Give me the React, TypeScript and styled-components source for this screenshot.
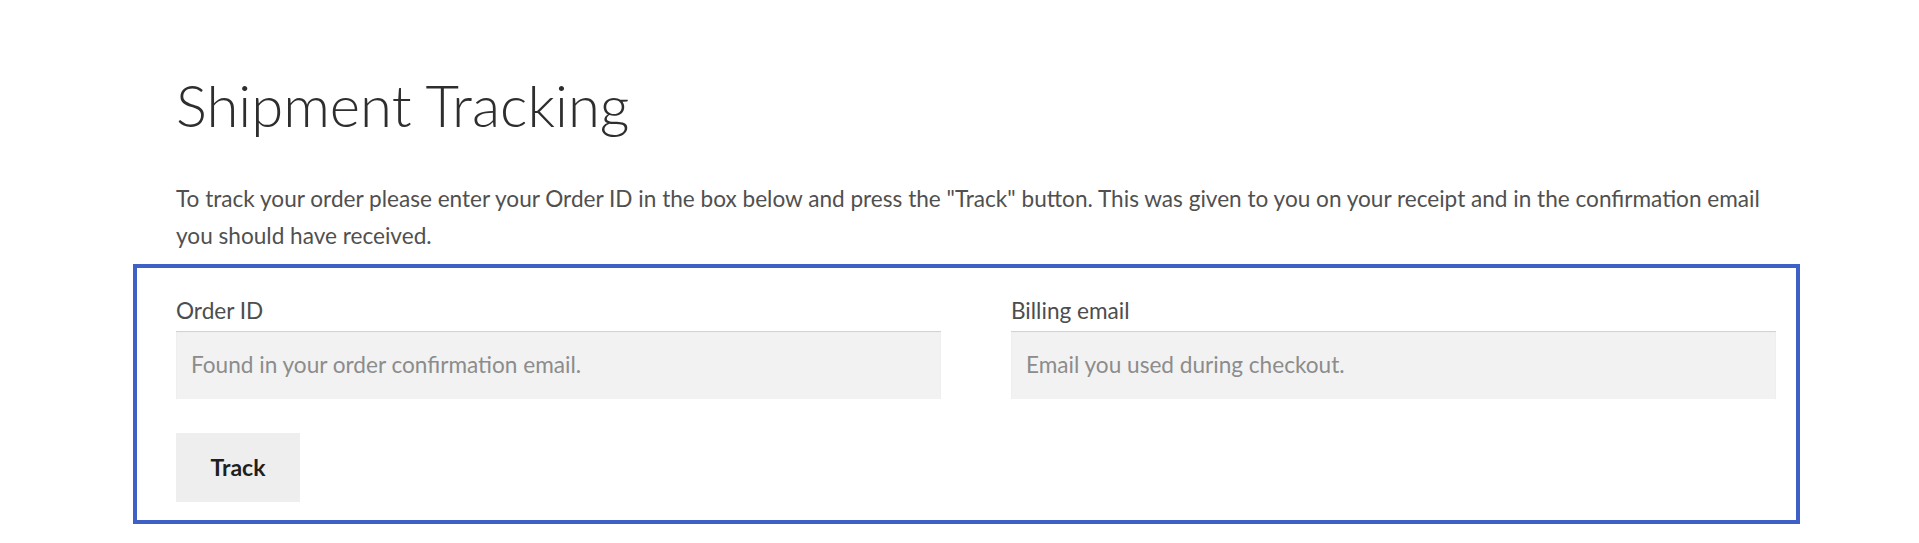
import React from "react";
import styled, { createGlobalStyle } from "styled-components";

const GlobalStyle = createGlobalStyle`
  body {
    margin: 0;
    background: #ffffff;
    font-family: "Lato", "Open Sans", sans-serif;
  }
  * {
    box-sizing: border-box;
  }
`;

const fields = [
  { id: "orderid", label: "Order ID", placeholder: "Found in your order confirmation email." },
  { id: "order_email", label: "Billing email", placeholder: "Email you used during checkout." },
];

export default function App() {
  return (
    <>
      <GlobalStyle />
      <Page>
        <Intro>
          <Title>Shipment Tracking</Title>
          <Lead>
            To track your order please enter your Order ID in the box below and press the "Track"
            button. This was given to you on your receipt and in the confirmation email you should
            have received.
          </Lead>
        </Intro>
        <TrackForm onSubmit={(e) => e.preventDefault()}>
          <FieldGrid>
            {fields.map((f) => (
              <Field key={f.id}>
                <Label htmlFor={f.id}>{f.label}</Label>
                <Input id={f.id} type="text" placeholder={f.placeholder} />
              </Field>
            ))}
          </FieldGrid>
          <TrackButton type="submit">Track</TrackButton>
        </TrackForm>
      </Page>
    </>
  );
}

const Page = styled.div`
  width: 1667px;
  margin-left: 133px;
  padding-top: 70px;
`;

const Intro = styled.div`
  padding: 0 22px 0 43px;
`;

const Title = styled.h1`
  margin: 0 0 40px;
  font-family: "Lato", sans-serif;
  font-weight: 300;
  font-size: 58px;
  line-height: 1.2;
  color: #2e2e2e;
`;

const Lead = styled.p`
  margin: 0 0 10px;
  font-size: 22.6px;
  line-height: 37px;
  color: #505050;
`;

const TrackForm = styled.form`
  border: 4px solid #3f60c6;
  padding: 28px 20px 18px 39px;
`;

const FieldGrid = styled.div`
  display: grid;
  grid-template-columns: 1fr 1fr;
  column-gap: 70px;
`;

const Field = styled.div`
  display: flex;
  flex-direction: column;
`;

const Label = styled.label`
  margin-bottom: 5px;
  font-size: 22.6px;
  line-height: 30px;
  color: #4d4d4d;
`;

const Input = styled.input`
  height: 68px;
  padding: 0 15px;
  border: 0;
  outline: none;
  background: #f2f2f2;
  box-shadow: inset 0 1px 1px rgba(0, 0, 0, 0.14);
  font-family: "Lato", sans-serif;
  font-size: 22.6px;
  color: #444;

  &::placeholder {
    color: #8c8c8c;
    opacity: 1;
  }
`;

const TrackButton = styled.button`
  display: block;
  margin-top: 34px;
  width: 124px;
  height: 69px;
  border: 0;
  background: #eeeeee;
  font-family: "Lato", sans-serif;
  font-weight: 700;
  font-size: 23px;
  color: #1f1f1f;
  cursor: pointer;
`;
